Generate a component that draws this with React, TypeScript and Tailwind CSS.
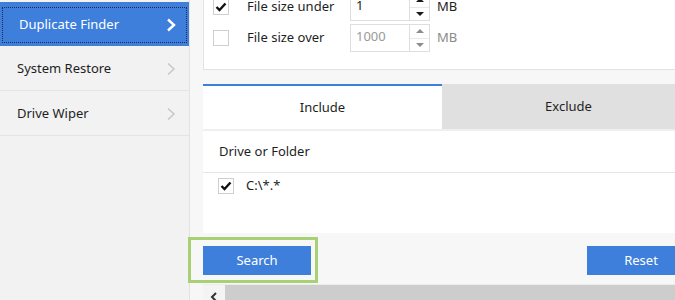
import React from "react";

function Chevron({ active }: { active?: boolean }) {
  return (
    <svg width="10" height="14" viewBox="0 0 10 14">
      <polyline
        points="2,1.5 8,7 2,12.5"
        fill="none"
        stroke={active ? "#ffffff" : "#c6c6c6"}
        strokeWidth={active ? 2.4 : 1.4}
      />
    </svg>
  );
}

function CheckBox({ checked }: { checked?: boolean }) {
  return (
    <div className="flex h-[16px] w-[16px] shrink-0 items-center justify-center border border-[#cfcfcf] bg-white">
      {checked && (
        <svg width="12" height="10" viewBox="0 0 12 10">
          <polyline points="1.5,5 4.5,8 10.5,1.5" fill="none" stroke="#111" strokeWidth="2.4" />
        </svg>
      )}
    </div>
  );
}

function Spin({ value, disabled }: { value: string; disabled?: boolean }) {
  const arrow = disabled ? "#8c8c8c" : "#1a1a1a";
  return (
    <div className="flex h-[28px] w-[80px] border border-[#dedede] bg-white">
      <div
        className={`flex-1 pl-[5px] pt-[1px] text-[13px] leading-[20px] ${
          disabled ? "text-[#9a9a9a]" : "text-[#1e1e1e]"
        }`}
      >
        {value}
      </div>
      <div className="flex w-[20px] flex-col border-l border-[#dedede]">
        <div className="flex flex-1 items-center justify-center border-b border-[#e8e8e8]">
          <svg width="8" height="4" viewBox="0 0 8 4">
            <polygon points="0,4 8,4 4,0" fill={arrow} />
          </svg>
        </div>
        <div className="flex flex-1 items-center justify-center">
          <svg width="8" height="4" viewBox="0 0 8 4">
            <polygon points="0,0 8,0 4,4" fill={arrow} />
          </svg>
        </div>
      </div>
    </div>
  );
}

function SizeRow({ label, value, checked, disabled }: { label: string; value: string; checked?: boolean; disabled?: boolean }) {
  return (
    <div className="flex h-[28px] items-center pl-[9px]">
      <CheckBox checked={checked} />
      <span className="ml-[18px] w-[103px]">{label}</span>
      <Spin value={value} disabled={disabled} />
      <span className={`ml-[7px] ${disabled ? "text-[#8a8a8a]" : ""}`}>MB</span>
    </div>
  );
}

const menu = ["Duplicate Finder", "System Restore", "Drive Wiper"];

export default function App() {
  return (
    <div className="relative flex h-[300px] w-[675px] overflow-hidden bg-[#f7f7f7] font-['Noto_Sans',sans-serif] text-[13px] text-[#1e1e1e]">
      <aside className="w-[190px] shrink-0 border-r border-[#e3e3e3] bg-[#f2f2f2] pt-[2px]">
        {menu.map((item, i) =>
          i === 0 ? (
            <div key={item} className="h-[44px] bg-[#3e7fdc] p-[2px] pt-[5px] pb-[3px]">
              <div className="flex h-full items-center justify-between border border-dotted border-[#1d2c44] pl-[16px] pr-[10px] text-white">
                {item}
                <Chevron active />
              </div>
            </div>
          ) : (
            <div
              key={item}
              className="flex h-[45px] items-center justify-between border-b border-[#e4e4e4] pl-[17px] pr-[13px] pt-[2px]"
            >
              {item}
              <Chevron />
            </div>
          )
        )}
      </aside>

      <main className="min-w-0 flex-1 overflow-hidden pl-[13px]">
        <div className="w-[492px]">
          <div className="-mt-[20px] flex h-[90px] flex-col gap-[3px] border-b border-l border-[#e3e3e3] bg-white pt-[13px]">
            <SizeRow label="File size under" value="1" checked />
            <SizeRow label="File size over" value="1000" disabled />
          </div>

          <div className="mt-[14px] flex h-[45px]">
            <div className="flex w-[239px] items-center justify-center border-t-2 border-[#3e7fdc] bg-white">Include</div>
            <div className="flex flex-1 items-center justify-center bg-[#e0e0e0]">Exclude</div>
          </div>

          <div className="h-[104px] border-t-2 border-[#efefef] bg-white">
            <div className="flex h-[42px] items-center border-b border-[#e6e6e6] pl-[16px]">Drive or Folder</div>
            <div className="flex items-center pl-[15px] pt-[3px]">
              <CheckBox checked />
              <span className="ml-[12px]">C:\*.*</span>
            </div>
          </div>

          <div className="flex h-[51px] items-start justify-between pt-[13px] text-white">
            <button className="h-[29px] w-[108px] bg-[#3e7fdc]">Search</button>
            <button className="h-[29px] w-[108px] bg-[#3e7fdc]">Reset</button>
          </div>

          <div className="flex h-[16px] border-t border-[#ececec]">
            <div className="flex w-[22px] items-end justify-center bg-[#f4f4f4]">
              <svg width="8" height="8" viewBox="0 0 8 8">
                <polyline points="6,1 2,5 6,9" fill="none" stroke="#333" strokeWidth="2" />
              </svg>
            </div>
            <div className="flex-1 bg-[#cdcdcd]" />
          </div>
        </div>
      </main>

      <div className="absolute left-[188px] top-[237px] h-[46px] w-[130px] border-[3px] border-[#a8d075]" />
    </div>
  );
}
